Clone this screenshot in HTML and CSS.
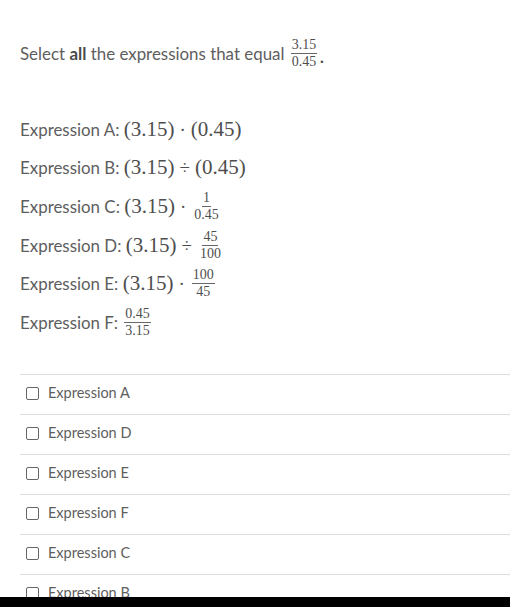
FILE: index.html
```html
<!DOCTYPE html>
<html>
<head>
<meta charset="utf-8">
<link rel="stylesheet" href="styles.css">
</head>
<body>
<div class="page">
  <div class="prompt">Select <b>all</b> the expressions that equal <span class="frac"><span class="num">3.15</span><span class="den">0.45</span></span><span class="m dot">.</span></div>
  <div class="exprs">
    <div class="row">Expression A: <span class="m">(3.15)<span class="op">·</span>(0.45)</span></div>
    <div class="row">Expression B: <span class="m">(3.15)<span class="op">÷</span>(0.45)</span></div>
    <div class="row">Expression C: <span class="m">(3.15)<span class="op">·</span></span><span class="frac"><span class="num">1</span><span class="den">0.45</span></span></div>
    <div class="row">Expression D: <span class="m">(3.15)<span class="op">÷</span></span><span class="frac"><span class="num">45</span><span class="den">100</span></span></div>
    <div class="row">Expression E: <span class="m">(3.15)<span class="op">·</span></span><span class="frac"><span class="num">100</span><span class="den">45</span></span></div>
    <div class="row">Expression F: <span class="frac"><span class="num">0.45</span><span class="den">3.15</span></span></div>
  </div>
  <ul class="choices">
    <li><span class="box"></span>Expression A</li>
    <li><span class="box"></span>Expression D</li>
    <li><span class="box"></span>Expression E</li>
    <li><span class="box"></span>Expression F</li>
    <li><span class="box"></span>Expression C</li>
    <li><span class="box"></span>Expression B</li>
  </ul>
</div>
<div class="bottom-bar"></div>
</body>
</html>
```
FILE: styles.css
```css
html, body {
  margin: 0;
  padding: 0;
  background: #fff;
  overflow: hidden;
}
body {
  font-family: Lato, "Open Sans", sans-serif;
  font-size: 16.9px;
  color: #5e5e5e;
}
.page {
  padding-left: 20px;
  padding-top: 34px;
}
.prompt {
  height: 38px;
  display: flex;
  align-items: center;
  white-space: pre;
}
.prompt b {
  font-weight: 700;
  color: #4a4a4a;
}
.dot {
  margin-top: 6px;
  margin-left: 0;
  font-size: 18px;
}
.exprs {
  margin-top: 38px;
  display: flex;
  flex-direction: column;
}
.row {
  height: 38.6px;
  display: flex;
  align-items: center;
  white-space: pre;
}
.m {
  font-family: "Liberation Serif", "DejaVu Serif", serif;
  font-size: 21px;
  color: #4e4e4e;
}
.op {
  display: inline-block;
  font-size: 19px;
  margin: 0 5px;
}
.frac {
  display: inline-flex;
  flex-direction: column;
  align-items: center;
  font-family: "Liberation Serif", "DejaVu Serif", serif;
  font-size: 14px;
  line-height: 12px;
  color: #4e4e4e;
  margin: 0 2px;
}
.frac .num {
  padding: 0 1px 2px;
  border-bottom: 1px solid #666;
}
.frac .den {
  padding: 2px 1px 0;
}
.choices {
  list-style: none;
  margin: 32px 0 0;
  padding: 0;
}
.choices li {
  border-top: 1px solid #dcdcdc;
  display: flex;
  align-items: center;
  padding-left: 6px;
  padding-bottom: 4px;
  height: 35px;
  font-size: 14.5px;
  color: #5e5e5e;
}
.box {
  width: 11px;
  height: 11px;
  border: 1px solid #666;
  border-radius: 2px;
  margin-right: 9px;
  margin-top: 2px;
  flex: none;
}
.bottom-bar {
  position: fixed;
  left: 0;
  right: 0;
  bottom: 0;
  height: 10px;
  background: #000;
}
```
